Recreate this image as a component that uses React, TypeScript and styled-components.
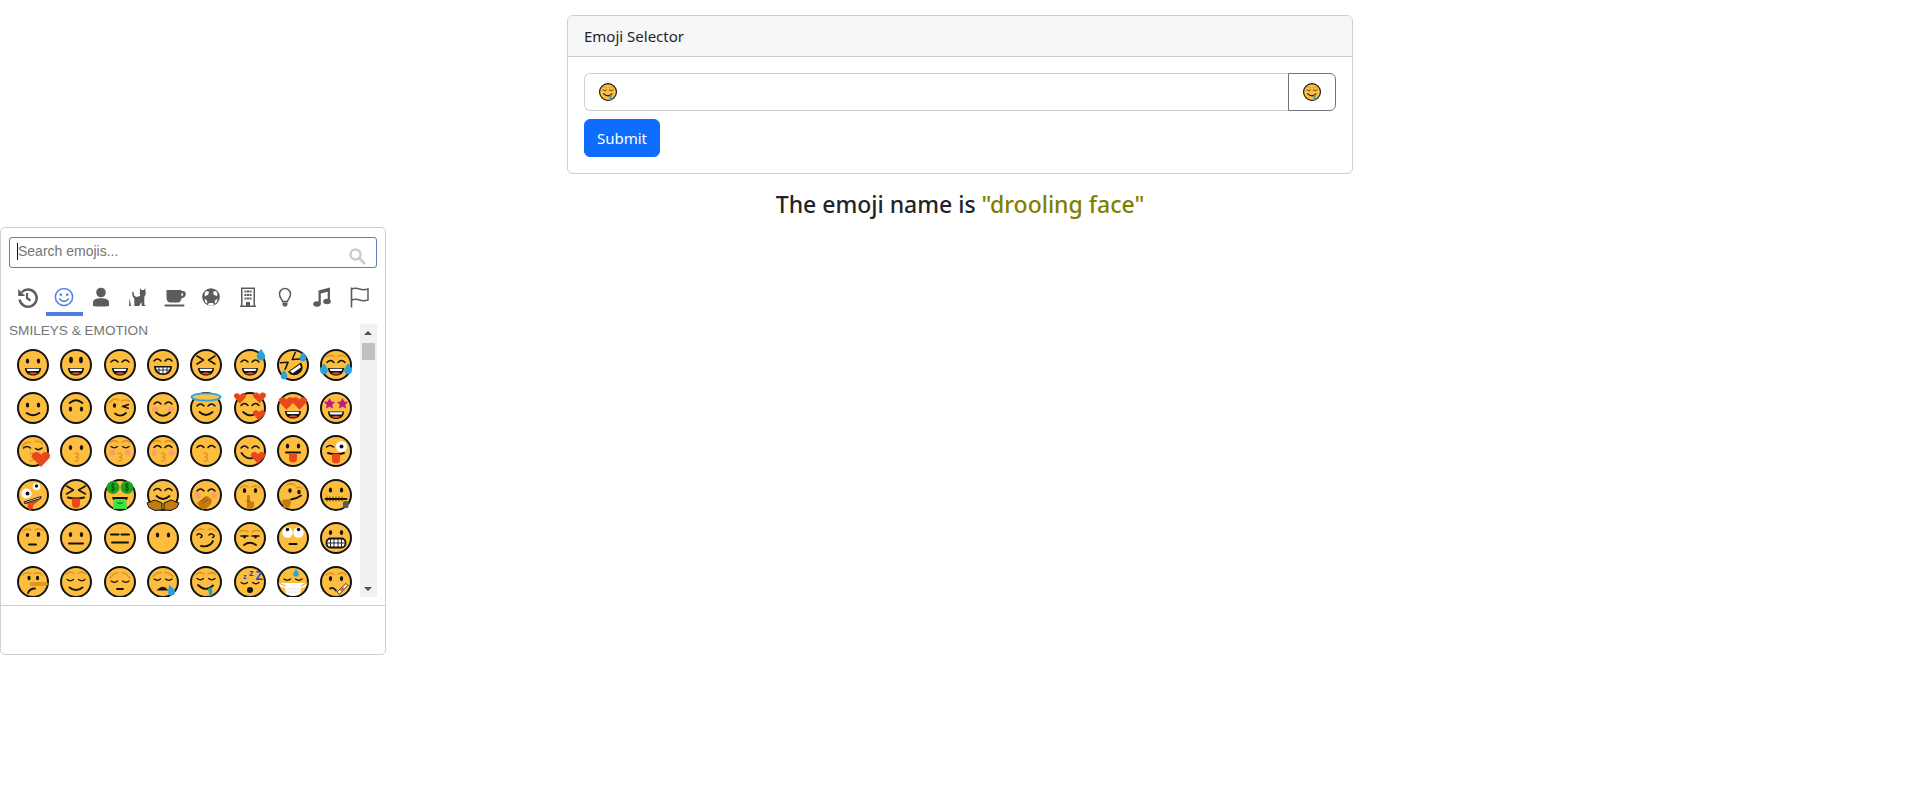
import React from "react";
import styled, { createGlobalStyle } from "styled-components";

const GlobalStyle = createGlobalStyle`
  html, body {
    margin: 0;
    padding: 0;
    background: #fff;
    color: #212529;
    font-family: "Noto Sans", "Open Sans", sans-serif;
  }
`;

const Page = styled.div`
  position: relative;
  height: 804px;
  padding-top: 15px;
  box-sizing: border-box;
  overflow: hidden;
`;

const Card = styled.section`
  width: 786px;
  margin: 0 auto;
  box-sizing: border-box;
  border: 1px solid #cfcfcf;
  border-radius: 6px;
`;

const CardHeader = styled.header`
  height: 41px;
  box-sizing: border-box;
  padding: 0 16px;
  display: flex;
  align-items: center;
  font-size: 15px;
  background: #f7f7f7;
  border-bottom: 1px solid #cfcfcf;
  border-radius: 5px 5px 0 0;
`;

const CardBody = styled.div`
  padding: 16px;
  display: flex;
  flex-direction: column;
  align-items: flex-start;
  gap: 8px;
`;

const InputRow = styled.div`
  display: flex;
  width: 100%;
  height: 38px;
`;

const EmojiInput = styled.div`
  flex: 1;
  display: flex;
  align-items: center;
  padding-left: 14px;
  border: 1px solid #cfcfcf;
  border-right: 0;
  border-radius: 6px 0 0 6px;
`;

const ToggleButton = styled.button`
  width: 48px;
  padding: 0;
  display: flex;
  align-items: center;
  justify-content: center;
  background: #fff;
  border: 1px solid #6c757d;
  border-radius: 0 6px 6px 0;
`;

const SubmitButton = styled.button`
  width: 76px;
  height: 38px;
  padding: 0;
  font-family: inherit;
  font-size: 15px;
  color: #fff;
  background: #0d6efd;
  border: 1px solid #0d6efd;
  border-radius: 6px;
`;

const Result = styled.h4`
  margin: 16px 0 0;
  text-align: center;
  font-size: 23px;
  line-height: 29px;
  font-weight: 500;
`;

const EmojiName = styled.span`
  color: #808000;
`;

const Picker = styled.div`
  position: absolute;
  left: 0;
  top: 227px;
  width: 386px;
  height: 428px;
  box-sizing: border-box;
  display: flex;
  flex-direction: column;
  background: #fff;
  border: 1px solid #cfcfcf;
  border-radius: 5px;
  font-family: "Liberation Sans", Arial, sans-serif;
`;

const SearchBox = styled.div`
  position: relative;
  display: flex;
  align-items: center;
  height: 31px;
  box-sizing: border-box;
  margin: 9px 8px 0;
  padding-left: 7px;
  border: 1px solid #5b80b5;
  border-radius: 3px;
`;

const Caret = styled.span`
  width: 1px;
  height: 17px;
  margin-top: -2px;
  background: #111;
`;

const SearchInput = styled.input`
  flex: 1;
  min-width: 0;
  padding: 0 0 3px;
  border: 0;
  outline: 0;
  background: transparent;
  font-family: inherit;
  font-size: 14px;
  &::placeholder {
    color: #757575;
    opacity: 1;
  }
`;

const SearchIcon = styled.svg`
  position: absolute;
  right: 10px;
  top: 9px;
  width: 18px;
  height: 18px;
  fill: none;
  stroke: #cbcbcb;
`;

const Tabs = styled.nav`
  display: grid;
  grid-template-columns: repeat(10, 1fr);
  margin: 11px 8px 0;
  height: 37px;
`;

const Tab = styled.button<{ $active?: boolean }>`
  padding: 3px 0 0;
  display: flex;
  align-items: center;
  justify-content: center;
  background: none;
  border: 0;
  border-bottom: 4px solid ${(p) => (p.$active ? "#4f7fe0" : "transparent")};
  color: ${(p) => (p.$active ? "#4f7fe0" : "#5c5c5c")};
`;

const TabIcon = styled.svg`
  width: 24px;
  height: 24px;
  fill: currentColor;
  stroke: none;
`;

const Scroller = styled.div`
  display: flex;
  height: 273px;
  margin: 8px 8px 0;
  overflow: hidden;
`;

const ListPane = styled.div`
  flex: 1;
  min-width: 0;
`;

const SectionTitle = styled.div`
  height: 19px;
  line-height: 13px;
  font-size: 13.6px;
  color: #757575;
`;

const EmojiGrid = styled.div`
  display: grid;
  grid-template-columns: repeat(8, 43.33px);
  grid-auto-rows: 43.4px;
  padding-left: 2.3px;
`;

const EmojiCell = styled.span`
  display: flex;
  align-items: center;
  justify-content: center;
`;

const ScrollBar = styled.div`
  position: relative;
  width: 17px;
  background: #f1f1f1;
`;

const ScrollThumb = styled.div`
  position: absolute;
  left: 2px;
  top: 19px;
  width: 13px;
  height: 17px;
  background: #c1c1c1;
`;

const ScrollArrow = styled.span<{ $down?: boolean }>`
  position: absolute;
  left: 4px;
  ${(p) => (p.$down ? "bottom: 6px;" : "top: 7px;")}
  border-left: 4px solid transparent;
  border-right: 4px solid transparent;
  ${(p) => (p.$down ? "border-top" : "border-bottom")}: 4px solid #505050;
`;

const PickerFooter = styled.div`
  flex: 1;
  margin-top: 8px;
  border-top: 1px solid #cfcfcf;
`;

const FaceSvg = styled.svg<{ $size: number }>`
  display: block;
  width: ${(p) => p.$size}px;
  height: ${(p) => p.$size}px;
  overflow: visible;
`;

const YELLOW = "#fdbd3e";
const INK = "#141414";
const BROW = "#e3951f";
const RED = "#e8481c";
const BLUE = "#2aa3dc";
const PINK = "#f89e70";

const Line = ({ d, c = INK, w = 1.5 }: { d: string; c?: string; w?: number }) => (
  <path d={d} fill="none" stroke={c} strokeWidth={w} strokeLinecap="round" strokeLinejoin="round" />
);

const Dots = ({ y = 12 }: { y?: number }) => (
  <>
    <ellipse cx="10.5" cy={y} rx="1.7" ry="2.5" fill={INK} />
    <ellipse cx="21.5" cy={y} rx="1.7" ry="2.5" fill={INK} />
  </>
);

const ArcEyes = ({ y = 13 }: { y?: number }) => (
  <>
    <Line d={`M7 ${y}q3.500-4 7 0`} />
    <Line d={`M18 ${y}q3.500-4 7 0`} />
  </>
);

const ClosedEyes = ({ y = 13 }: { y?: number }) => (
  <>
    <Line d={`M7 ${y}q3.500 2.600 6.500 0`} w={1.2} />
    <Line d={`M18.500 ${y}q3.500 2.600 6.500 0`} w={1.2} />
  </>
);

const Brows = ({ y = 9 }: { y?: number }) => (
  <>
    <Line d={`M6 ${y}q4-3.500 8-.5`} c={BROW} />
    <Line d={`M18 ${y - 0.5}q4-3 8 .5`} c={BROW} />
  </>
);

const Laugh = ({ y = 19 }: { y?: number }) => (
  <>
    <path d={`M8 ${y}h16c0 5-3.500 7.500-8 7.500s-8-2.500-8-7.500z`} fill={INK} />
    <path d={`M9.500 ${y + 0.8}h13l-1 2.200h-11z`} fill="#fff" />
    <path d={`M11.500 ${y + 5.4}q4.500-2.400 9 0q-4.500 2.200-9 0z`} fill={RED} />
  </>
);

const Smile = () => <Line d="M9.500 20.500q6.500 5.500 13 0" w={1.8} />;

const Blush = () => (
  <>
    <circle cx="8" cy="17.5" r="3" fill={PINK} />
    <circle cx="24" cy="17.5" r="3" fill={PINK} />
  </>
);

const Kiss = ({ x = 14 }: { x?: number }) => (
  <Line d={`M${x} 18.500q4-.8 3.400 1.800q-.5 1.500-2.400 1.700q2.900.2 2.400 2.400q-.8 2-3.400 1.400`} c={BROW} w={1.4} />
);

const Tongue = ({ x = 16, y = 20 }: { x?: number; y?: number }) => (
  <path d={`M${x - 4} ${y}h8v5.500a4 4 0 0 1-8 0z`} fill={RED} />
);

const Heart = ({ x, y, s = 1, c = RED }: { x: number; y: number; s?: number; c?: string }) => (
  <path
    transform={`translate(${x} ${y}) scale(${s})`}
    d="M0 4.500L-4.600-.4C-6.400-3.400-2-5.400 0-2.400C2-5.400 6.400-3.400 4.600-.4z"
    fill={c}
  />
);

const Drop = ({ x, y, s = 1 }: { x: number; y: number; s?: number }) => (
  <path transform={`translate(${x} ${y}) scale(${s})`} d="M0-4.500C2-1.500 3-.4 3 1a3 3 0 0 1-6 0c0-1.400 1-2.500 3-5.500z" fill={BLUE} />
);

const Droolly = () => (
  <>
    <Brows y={8.5} />
    <ClosedEyes y={12.5} />
    <Line d="M8 19q8 7.500 15 .5" w={1.8} />
    <path d="M18 22.500l4-1.500 .5 8.500-3 1z" fill="#1fa4b8" />
  </>
);

// one entry per emoji, row by row, as they stand in the picker
const FACES: React.ReactNode[] = [
  <><Dots /><Laugh /></>,
  <><ellipse cx="11" cy="11" rx="1.900" ry="3.200" fill={INK} /><ellipse cx="21" cy="11" rx="1.900" ry="3.200" fill={INK} /><Laugh /></>,
  <><ArcEyes /><Laugh /></>,
  <>
    <ArcEyes y={12} />
    <path d="M7 17h18c0 6-4 9-9 9s-9-3-9-9z" fill={INK} />
    <path d="M9 18.500h14c-.5 3.500-3 5.800-7 5.800s-6.500-2.300-7-5.800z" fill="#fff" />
    <Line d="M12 18.500v5.500M16 18.500v6M20 18.500v5.500M9.500 21h13" w={0.8} />
  </>,
  <><Line d="M7 7l6.500 4-6.500 4M25 7l-6.500 4 6.500 4" /><Laugh /></>,
  <><ArcEyes /><Laugh /><Drop x={27} y={6} s={1.4} /></>,
  <g>
    <g transform="rotate(-35 16 16)">
      <Line d="M7 7l6.500 4-6.500 4M25 7l-6.500 4 6.500 4" />
      <path d="M8 18.500h16c0 5-3.500 8-8 8s-8-3-8-8z" fill={INK} />
      <path d="M10 19.500h12l-1 3h-10z" fill="#fff" />
    </g>
    <Drop x={26} y={8} s={1.1} />
    <Drop x={7} y={26} s={1.1} />
  </g>,
  <>
    <Line d="M6 8q4-3 8-.5M18 7.500q4-2.500 8 .5" c={BROW} />
    <ArcEyes y={13.500} />
    <Laugh y={19} />
    <Drop x={4} y={20} s={1.300} />
    <Drop x={28} y={20} s={1.300} />
  </>,

  <><Dots y={13} /><Line d="M9.500 21q6.500 4.500 13 0" w={1.8} /></>,
  <><Dots y={17} /><Line d="M9.500 11q6.500-5.500 13 0" w={1.8} /></>,
  <>
    <Line d="M5.500 11q4-6 9-3" c={BROW} />
    <ellipse cx="10.500" cy="13.500" rx="1.600" ry="2.300" fill={INK} />
    <Line d="M18.500 14.500l6-2M18.700 14.300l5.500 2" />
    <Line d="M17.500 9q4-2 8 0" c={BROW} />
    <Line d="M11 21.500q5.500 4.500 11-.5" w={1.8} />
  </>,
  <><Blush /><ArcEyes y={12} /><Line d="M9 20.500q7 6.500 14 0" w={1.8} /></>,
  <>
    <ArcEyes y={14} />
    <Line d="M9.500 20q6.500 6 13 0" w={1.8} />
    <ellipse cx="16" cy="5" rx="14.500" ry="3.600" fill="#f6c24c" stroke={BLUE} strokeWidth="1.800" />
  </>,
  <>
    <ArcEyes y={13.500} />
    <Line d="M9 20q7 6 13 1.500" w={1.8} />
    <Heart x={6} y={6} s={1.200} />
    <Heart x={25.500} y={5.500} s={1.300} />
    <Heart x={25} y={23} s={1.200} />
  </>,
  <><Heart x={9.500} y={11} s={1.500} /><Heart x={22.500} y={11} s={1.500} /><Laugh y={19} /></>,
  <>
    <path d="M9.500 6l1.800 3.500 3.700.6-2.700 2.700.7 3.800-3.500-1.800-3.500 1.800.7-3.800-2.700-2.700 3.700-.6z" fill="#c2187f" />
    <path d="M22.500 6l1.800 3.500 3.700.6-2.700 2.700.7 3.800-3.500-1.800-3.500 1.800.7-3.800-2.700-2.700 3.700-.6z" fill="#c2187f" />
    <Laugh y={19.500} />
  </>,

  <>
    <Line d="M5.500 11q3-5 8-3.500M18 6.500q4-1 7.500 2" c={BROW} />
    <Line d="M6.500 13q3.500-3 7 0" />
    <Line d="M18.500 13.500q3 2.500 6.500-.5" />
    <Kiss x={13} />
    <Heart x={24} y={24} s={1.800} />
  </>,
  <><Dots y={12.500} /><Kiss x={15} /></>,
  <><Brows y={7.500} /><ClosedEyes y={11.500} /><Blush /><Kiss x={14.500} /></>,
  <><Brows y={7.500} /><ArcEyes y={12.500} /><circle cx="7.500" cy="18" r="3" fill={PINK} /><circle cx="24.500" cy="18" r="3" fill={PINK} /><Kiss x={14.500} /></>,
  <><ArcEyes y={12.500} /><Kiss x={14} /></>,
  <><ArcEyes y={13} /><Line d="M7.500 18q6 8.500 15 3.500" w={1.8} /><Heart x={24} y={22.500} s={1.400} /></>,
  <><Dots y={11} /><Line d="M9 17.500h14" w={2} /><Tongue y={18} /></>,
  <>
    <Line d="M6.500 12q3.500-3 7 0" />
    <circle cx="21.500" cy="11.500" r="5.500" fill="#fff" />
    <circle cx="21.500" cy="11.500" r="2" fill={INK} />
    <Line d="M8 18q8 2.500 16 0" w={2} />
    <Tongue x={16} y={19} />
  </>,

  <>
    <circle cx="9.500" cy="14.500" r="5" fill="#fff" />
    <circle cx="10.500" cy="14.500" r="2" fill={INK} />
    <circle cx="19.500" cy="7.500" r="3.800" fill="#fff" />
    <circle cx="19.500" cy="7" r="1.700" fill={INK} />
    <path d="M7 23l16-5 1.500 1.500-8 6.500-1 4q-4 1.500-5-1.500l.5-3z" fill={RED} />
    <path d="M7 23l17-5.500-.5 2-16 5z" fill="#fff" stroke={INK} strokeWidth="1" />
  </>,
  <><Line d="M6.500 7l7 4-7 4M25.500 7l-7 4 7 4" /><Line d="M8 18.500q8 2 16 0" w={2} /><Tongue y={19.500} /></>,
  <>
    <circle cx="9" cy="8.500" r="6.500" fill="#1ea51e" />
    <circle cx="23" cy="8.500" r="6.500" fill="#1ea51e" />
    <path d="M10.500 5.500q-3-1.500-3 1t2.500 2q2 1.500-.5 2.500t-2.500-.8M9 3.800v9M24.500 5.500q-3-1.500-3 1t2.500 2q2 1.500-.5 2.500t-2.500-.8M23 3.800v9" fill="none" stroke="#0d4d0d" strokeWidth="1" />
    <path d="M8 18h16l-1 3h-14z" fill={INK} />
    <path d="M10 20h12l1 10h-14z" fill="#3fe03f" />
    <path d="M13 24h6" stroke="#159015" strokeWidth="1.500" />
  </>,
  <>
    <ArcEyes y={11.500} />
    <Line d="M9.500 17q6.500 6 13 0" w={1.8} />
    <path d="M0 24l8-3 7 3v7l-7 .5-6-3z" fill="#c67a12" stroke={INK} strokeWidth="1" />
    <path d="M32 24l-8-3-7 3v7l7 .5 6-3z" fill="#c67a12" stroke={INK} strokeWidth="1" />
  </>,
  <>
    <ArcEyes y={12} />
    <circle cx="8" cy="16.500" r="3" fill={PINK} />
    <circle cx="24" cy="16.500" r="3" fill={PINK} />
    <path d="M7 24l9-7 3 1 3 3-1 4-4 4-4 1.500-3-1.500z" fill="#c67a12" />
    <Line d="M11 22l5-3.500M13 24l5-3.500" c="#8a5208" w={1} />
  </>,
  <>
    <Line d="M6 9q4-4 8-1M18 8q4-3 8 1" c={BROW} />
    <Dots y={11.500} />
    <path d="M13 29v-12q1.500-2 3 0v5l4 1v4l-2 2.500h-4z" fill="#c67a12" />
    <Line d="M15 22h-2" c="#8a5208" w={0.8} />
  </>,
  <>
    <Line d="M10 6q4-3 8 .5M19 9q3-2 6 .5" c={BROW} />
    <ellipse cx="13" cy="11.500" rx="1.700" ry="2.300" fill={INK} />
    <ellipse cx="22" cy="13" rx="1.700" ry="2.300" fill={INK} />
    <Line d="M14 20.500q5-.3 10-4" w={1.8} />
    <path d="M5 21l7-1 2 3-1.500 5-6 1.500z" fill="#c67a12" />
  </>,
  <>
    <Dots y={11} />
    <Line d="M5.500 20h21" w={2} />
    <Line d="M7 18v4M10 18v4M13 18v4M16 18v4M19 18v4M22 18v4" w={0.8} />
    <rect x="23" y="22" width="5.500" height="7" rx="1.500" fill="#5b5b5b" />
  </>,

  <>
    <Line d="M6 9q4-3.500 8-1M18 8q4-2.500 9 1" c={BROW} />
    <ellipse cx="10.500" cy="13" rx="1.700" ry="1.900" fill={INK} />
    <ellipse cx="21.500" cy="12.500" rx="1.800" ry="2.400" fill={INK} />
    <Line d="M12 22.500h7" w={2} />
  </>,
  <><Dots y={12.500} /><Line d="M9 21.500h14" w={2} /></>,
  <><Line d="M7 12.500h7.500M17.500 12.500h7.500" w={2} /><Line d="M8 20.500h16" w={2} /></>,
  <><Dots y={13} /></>,
  <>
    <Line d="M6 9q4-4 8-1M18 8q4-3 8 1" c={BROW} />
    <Line d="M7 13q2.500-2.500 5 .5q0 2-1.500 2" />
    <Line d="M19 13q2.500-2.500 5 .5q0 2-1.500 2" />
    <Line d="M11 24q9 1.500 12-5" w={1.8} />
  </>,
  <>
    <Line d="M6 9.500q4-2.500 8 .5M18 10q4-3 8-.5" c={BROW} />
    <Line d="M7 14h7M18 14h7" />
    <circle cx="10.500" cy="15" r="1.400" fill={INK} />
    <circle cx="21.500" cy="15" r="1.400" fill={INK} />
    <Line d="M10 23q6-4.500 12 0" w={1.8} />
  </>,
  <>
    <circle cx="10.500" cy="10.500" r="5.200" fill="#fff" />
    <circle cx="21.500" cy="10.500" r="5.200" fill="#fff" />
    <circle cx="10.500" cy="7.500" r="1.800" fill={INK} />
    <circle cx="21.500" cy="7.500" r="1.800" fill={INK} />
    <Line d="M12.500 22h7" w={2} />
  </>,
  <>
    <Dots y={10.500} />
    <rect x="6.500" y="16.500" width="19" height="9" rx="4" fill="#fff" stroke={INK} strokeWidth="1.800" />
    <Line d="M10.500 17v8M14 17v8M18 17v8M21.500 17v8M7 21h18" w={0.9} />
  </>,

  <>
    <Line d="M5.500 9q4-3.500 8-1.500M17 7.500q4-2 8 1.500" c={BROW} />
    <ellipse cx="12" cy="12" rx="1.600" ry="2.300" fill={INK} />
    <ellipse cx="20.500" cy="12" rx="1.600" ry="2.300" fill={INK} />
    <path d="M13 16h15l4 2-4 2h-15z" fill={BROW} />
    <Line d="M11 27q1.500-4.500 7-4.500" w={1.8} />
  </>,
  <><Brows y={8} /><ClosedEyes y={13.500} /><Line d="M9.500 21.500q6.500 5 13 0" w={2} /></>,
  <><Line d="M6 12q4-5 8-5.500M26 12q-4-5-8-5.500" c={BROW} /><ClosedEyes y={15} /><Line d="M13 23h6" w={1.8} /></>,
  <>
    <Line d="M6 10.500q4-4.500 8-4M26 10.500q-4-4.500-8-4" c={BROW} />
    <ClosedEyes y={13} />
    <path d="M10.500 24q5.500-5.500 10 0z" fill={INK} stroke={INK} strokeWidth="1" />
    <path d="M22 19c3 2 6 4 6 7a3.500 3.500 0 0 1-7 0z" fill={BLUE} />
  </>,
  <Droolly />,
  <>
    <ClosedEyes y={16.500} />
    <circle cx="16" cy="24" r="3" fill={INK} />
    <text x="9" y="13" fontFamily="Liberation Sans, sans-serif" fontWeight="700" fontSize="7" fill="#1a48c8">z</text>
    <text x="15" y="9.500" fontFamily="Liberation Sans, sans-serif" fontWeight="700" fontSize="9" fill="#1a48c8">z</text>
    <text x="21.500" y="14" fontFamily="Liberation Sans, sans-serif" fontWeight="700" fontSize="12" fill="#1a48c8">Z</text>
  </>,
  <>
    <ClosedEyes y={13} />
    <Drop x={19} y={7} s={0.900} />
    <path d="M1.500 17l6.500 0h16l6.500 0-2 4-4.500 1-1 6q-7 4-14 0l-1-6-4.500-1z" fill="#fff" />
    <Line d="M2 17l6 3M30 17l-6 3" c={BROW} w={1} />
    <Line d="M10 23h12M10 26h12" c="#dcdcdc" w={0.800} />
  </>,
  <>
    <Line d="M6 9q4-3.500 8-.5M18 8q5-3 8 1" c={BROW} />
    <Dots y={12.500} />
    <Line d="M10 22.500q3-2 6 2" w={1.8} />
    <path d="M17 26l9-8.500 1.800 1.800-8.500 9z" fill="#fff" stroke={INK} strokeWidth="0.800" />
    <path d="M20 24l3-3 1.200 1.200-3 3z" fill={RED} />
  </>,
];

const Face = ({ art, size = 32 }: { art: React.ReactNode; size?: number }) => (
  <FaceSvg viewBox="0 0 32 32" $size={size}>
    <circle cx="16" cy="16" r="15" fill={YELLOW} stroke={INK} strokeWidth="2" />
    {art}
  </FaceSvg>
);

const CATEGORY_ICONS: React.ReactNode[] = [
  <>
    <path d="M6.800 7.200A8.600 8.600 0 1 1 4.600 14.500" fill="none" stroke="currentColor" strokeWidth="2.400" />
    <path d="M3.200 4v7h7z" />
    <path d="M12 8v5.200l3.500 2.300" fill="none" stroke="currentColor" strokeWidth="2.200" />
  </>,
  <>
    <circle cx="12" cy="12" r="8.600" fill="none" stroke="currentColor" strokeWidth="1.500" />
    <circle cx="8.800" cy="9.800" r="1.300" />
    <circle cx="15.200" cy="9.800" r="1.300" />
    <path d="M7.500 14q4.500 4.800 9 0" fill="none" stroke="currentColor" strokeWidth="1.500" strokeLinecap="round" />
  </>,
  <>
    <circle cx="12" cy="7.500" r="4.800" />
    <path d="M4 21v-3.500c0-3 3.500-4.300 8-4.300s8 1.300 8 4.300V21q-8 1-16 0z" />
  </>,
  <>
    <path d="M14 3l1.400 2h2.600l1.200-2 .6 6-1.500 3v7.500l1.500 1.500h-4l-.5-4-2 4h-5v-7.500q-2.500-2-2-7 1.500 0 1.500 1.500-.3 3.500 3 4l3.500-1.200-.5-2.300z" />
    <path d="M3.500 13l1.500 8H3z" />
  </>,
  <>
    <path d="M3.500 5h15v1h1.500c4 0 4 7-1.500 7.200-.5 3.300-2 4.300-4 4.300h-7c-2.500 0-4-2-4-5zM18.500 8v3.200c2.300-.2 2.300-3.200 0-3.200z" />
    <rect x="1.500" y="19.500" width="20" height="2" rx="1" />
  </>,
  <>
    <circle cx="12" cy="12" r="8.800" />
    <path d="M7 6l3 .8-.8 3-3.200 1.500-.5-2.600zM17 6l-3 .8.8 3 3.200 1.500.5-2.600zM5.500 14l2.200 1 .8 2.800-1.500 .8q-1.200-2-1.500-4.600zM18.500 14l-2.200 1-.8 2.800 1.500 .8q1.200-2 1.500-4.600zM10 18l4 0 1.200 2-3.200 .7-3.200-.7z" fill="#fff" />
  </>,
  <>
    <path d="M5 2.500h14v18h1v1.500H4v-1.500h1zM6.500 4v16.500h3.500V17h4v3.500h3.500V4z" />
    <path d="M8.500 5.500h2v2h-2zM11 5.500h2v2h-2zM13.500 5.500h2v2h-2zM8.500 9h2v2h-2zM11 9h2v2h-2zM13.500 9h2v2h-2zM8.500 12.500h2v2h-2zM11 12.500h2v2h-2zM13.500 12.500h2v2h-2z" />
  </>,
  <>
    <path d="M9.500 16.500c0-2-3-3.500-3-7.500a5.500 5.500 0 0 1 11 0c0 4-3 5.500-3 7.500z" fill="none" stroke="currentColor" strokeWidth="1.500" />
    <path d="M9.500 17.500h5v2.200l-1 1.800h-3l-1-1.800z" />
  </>,
  <>
    <path d="M8.500 5.500L20 2.500v14h-2.300V6.700L10.800 8.500V19h-2.300z" />
    <ellipse cx="7" cy="19" rx="3.800" ry="2.800" />
    <ellipse cx="17" cy="16.500" rx="3.800" ry="2.800" />
  </>,
  <>
    <path d="M4.500 2.500v20" fill="none" stroke="currentColor" strokeWidth="1.600" />
    <path d="M4.500 4q4-1.500 8 0t8.500 0v11q-4.500 1.500-8.500 0t-8 0" fill="none" stroke="currentColor" strokeWidth="1.500" />
  </>,
];

const App = () => (
  <Page>
    <GlobalStyle />
    <Card>
      <CardHeader>Emoji Selector</CardHeader>
      <CardBody>
        <InputRow>
          <EmojiInput>
            <Face art={<Droolly />} size={18} />
          </EmojiInput>
          <ToggleButton type="button">
            <Face art={<Droolly />} size={18} />
          </ToggleButton>
        </InputRow>
        <SubmitButton type="button">Submit</SubmitButton>
      </CardBody>
    </Card>
    <Result>
      The emoji name is <EmojiName>"drooling face"</EmojiName>
    </Result>
    <Picker>
      <SearchBox>
        <Caret />
        <SearchInput placeholder="Search emojis..." />
        <SearchIcon viewBox="0 0 18 18">
          <circle cx="7.500" cy="7.500" r="5" strokeWidth="2.400" />
          <path d="M11.500 11.500L16 16" strokeWidth="3" strokeLinecap="round" />
        </SearchIcon>
      </SearchBox>
      <Tabs>
        {CATEGORY_ICONS.map((icon, i) => (
          <Tab key={i} type="button" $active={i === 1}>
            <TabIcon viewBox="0 0 24 24">{icon}</TabIcon>
          </Tab>
        ))}
      </Tabs>
      <Scroller>
        <ListPane>
          <SectionTitle>SMILEYS &amp; EMOTION</SectionTitle>
          <EmojiGrid>
            {FACES.map((art, i) => (
              <EmojiCell key={i}>
                <Face art={art} />
              </EmojiCell>
            ))}
          </EmojiGrid>
        </ListPane>
        <ScrollBar>
          <ScrollArrow />
          <ScrollThumb />
          <ScrollArrow $down />
        </ScrollBar>
      </Scroller>
      <PickerFooter />
    </Picker>
  </Page>
);

export default App;
